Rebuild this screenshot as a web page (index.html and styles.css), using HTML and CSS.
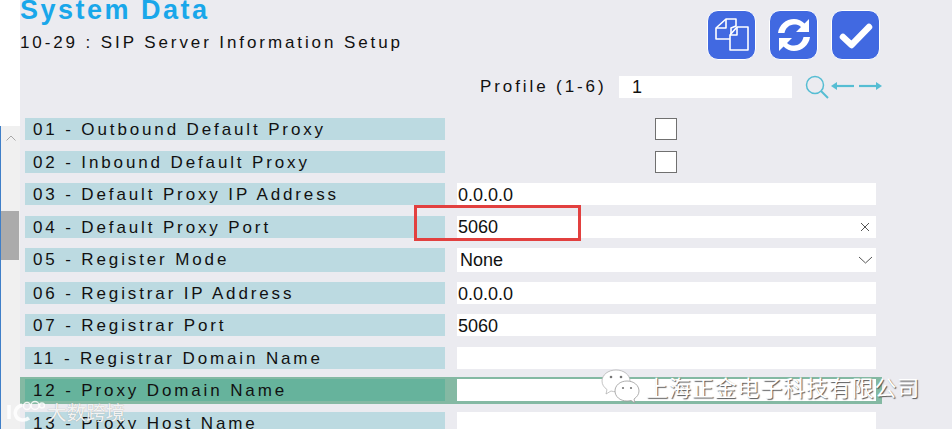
FILE: index.html
```html
<!DOCTYPE html>
<html lang="en">
<head>
<meta charset="utf-8">
<title>System Data</title>
<link rel="stylesheet" href="styles.css">
</head>
<body>
<div class="page">
  <aside class="side">
    <div class="scrollbar">
      <svg class="scroll-up" width="10" height="6" viewBox="0 0 10 6"><path d="M.5 5.5 5 1l4.500 4.500" fill="none" stroke="#a8a8a8"/></svg>
      <div class="thumb"></div>
    </div>
  </aside>
  <main class="main">
    <header class="head">
      <div class="titles">
        <h1 class="title">System Data</h1>
        <p class="subtitle">10-29 : SIP Server Information Setup</p>
      </div>
      <div class="actions">
        <button class="btn" type="button" aria-label="Copy">
          <svg width="34" height="34" viewBox="0 0 34 34" fill="none" stroke="#fff" stroke-width="1.600" stroke-linejoin="round"><path d="M11 1h10v7l-5 2v11H1V10z"/><path d="M11 1v9H1"/><path d="M22 9h11v23H15V17z" fill="#4169e1"/><path d="M22 9v8h-7"/></svg>
        </button>
        <button class="btn" type="button" aria-label="Refresh">
          <svg width="34" height="34" viewBox="0 0 34 34" fill="#fff"><path d="M1 15C2 7 9 1 17 1c4 0 8 2 10.500 4.500L32 1v13H19l5-5C22 7 20 6.500 17 6.500 12.500 6.500 8.500 10 7.500 15z"/><path d="M33 19c-1 8-8 14-16 14-4 0-8-2-10.500-4.500L2 33V20h13l-5 5c2 2 4 2.500 7 2.500 4.500 0 8.500-3.500 9.500-8.500z"/></svg>
        </button>
        <button class="btn" type="button" aria-label="Save">
          <svg width="34" height="34" viewBox="0 0 34 34" fill="none" stroke="#fff" stroke-width="6.500" stroke-linecap="round" stroke-linejoin="round"><path d="M4 19l8.500 8L30 9"/></svg>
        </button>
      </div>
    </header>
    <div class="profile">
      <span class="profile-label">Profile (1-6)</span>
      <span class="profile-value">1</span>
      <svg class="tools" width="78" height="26" viewBox="0 0 78 26" fill="none" stroke="#55bdd3"><circle cx="10" cy="10" r="8.500" stroke-width="1.500"/><path d="M16 16l7 7" stroke-width="2"/><path d="M30 11h19" stroke-width="2.200"/><path d="M26 11l6-4v8z" fill="#55bdd3" stroke="none"/><path d="M54 11h19" stroke-width="2.200"/><path d="M77 11l-6-4v8z" fill="#55bdd3" stroke="none"/></svg>
    </div>
    <div class="rows">
      <div class="row"><div class="label">01 - Outbound Default Proxy</div><div class="value center"><span class="check"></span></div></div>
      <div class="row"><div class="label">02 - Inbound Default Proxy</div><div class="value center"><span class="check"></span></div></div>
      <div class="row"><div class="label">03 - Default Proxy IP Address</div><div class="value field">0.0.0.0</div></div>
      <div class="row"><div class="label">04 - Default Proxy Port</div><div class="value field spread"><span class="port">5060</span><svg width="10" height="10" viewBox="0 0 10 10" fill="none" stroke="#555"><path d="M1 1l8 8M9 1l-8 8"/></svg></div></div>
      <div class="row row-tall"><div class="label">05 - Register Mode</div><div class="value field spread select">None<svg width="15" height="8" viewBox="0 0 15 8" fill="none" stroke="#555"><path d="M1 1l6.500 6L14 1"/></svg></div></div>
      <div class="row"><div class="label">06 - Registrar IP Address</div><div class="value field">0.0.0.0</div></div>
      <div class="row"><div class="label">07 - Registrar Port</div><div class="value field">5060</div></div>
      <div class="row"><div class="label">11 - Registrar Domain Name</div><div class="value field"></div></div>
      <div class="row row-active"><div class="label">12 - Proxy Domain Name</div><div class="value field"></div></div>
      <div class="row"><div class="label">13 - Proxy Host Name</div><div class="value field"></div></div>
    </div>
  </main>
</div>
<div class="redbox"></div>
<div class="mark-left">
  <svg width="38" height="24" viewBox="0 0 38 24" fill="none" stroke="#fff" stroke-opacity=".85"><path d="M2 5v14" stroke-width="3.500"/><path d="M15 5c-6 2-8 7-6 11 2 5 9 5 13 2" stroke-width="3.500"/><circle cx="20" cy="6" r="3.500" stroke-width="1.500"/><circle cx="28" cy="5.500" r="4" stroke-width="1.500"/><circle cx="35" cy="5.500" r="2.500" stroke-width="1.500"/></svg>
  <span class="mark-left-text">大数跨境</span>
</div>
<div class="mark-right">
  <svg width="40" height="34" viewBox="0 0 40 34"><path d="M15 1C7 1 1 6 1 12c0 3.500 2 6.500 5 8.500L5 25l5-3c2 .6 3 .7 5 .7C23 22.700 29 18 29 12S23 1 15 1z" fill="#fff" stroke="#aaa" stroke-width=".7"/><path d="M26 12c-7 0-12 4.500-12 10s5 10 12 10c1.500 0 2.500-.2 4-.6l4 2.600-1-4c3-2 5-4.800 5-8 0-5.500-5-10-12-10z" fill="#fff" stroke="#999" stroke-width=".8"/><circle cx="10" cy="8" r="1.300" fill="#777"/><circle cx="20" cy="8" r="1.300" fill="#777"/><circle cx="22" cy="19" r="1.100" fill="#777"/><circle cx="30" cy="19" r="1.100" fill="#777"/></svg>
  <span class="mark-right-text">上海正金电子科技有限公司</span>
</div>
</body>
</html>
```
FILE: styles.css
```css
* { box-sizing: border-box; }
html, body { margin: 0; height: 429px; overflow: hidden; background: #ebebf0; }
body { font-family: "Liberation Sans", Arial, sans-serif; color: #111; position: relative; }

.page { display: flex; height: 429px; overflow: hidden; }
.side { flex: 0 0 20px; background: #fff; padding-top: 126px; }
.scrollbar { height: 303px; background: #f0f0f0; border-left: 1.500px solid #3f7fc8; display: flex; flex-direction: column; align-items: center; }
.scroll-up { margin-top: 9px; }
.thumb { align-self: stretch; height: 49px; margin-top: 70px; margin-right: 1px; background: #ababab; }

.main { flex: 1; padding-left: 5px; min-width: 0; }
.head { display: flex; justify-content: space-between; height: 76px; margin-left: -5px; padding-right: 72px; }
.title { margin: 0; font-size: 27px; line-height: 20px; height: 20px; font-weight: 700; letter-spacing: 2.500px; color: #19a7ea; }
.subtitle { margin: 13px 0 0; font-size: 17px; line-height: 20px; letter-spacing: 2.900px; white-space: nowrap; }
.actions { display: flex; gap: 13px; padding-top: 10px; }
.btn { width: 49px; height: 50px; padding: 0; background: #4169e1; border: 1px solid #fff; border-radius: 11px; display: flex; align-items: center; justify-content: center; }

.profile { display: flex; align-items: center; height: 22px; margin-left: 455px; }
.profile-label { font-size: 17px; line-height: 24px; letter-spacing: 2.900px; white-space: nowrap; width: 139px; }
.profile-value { width: 173px; height: 22px; background: #fff; padding-left: 13px; font-size: 18px; line-height: 23px; }
.tools { margin-left: 13px; margin-top: 2px; overflow: visible; }

.rows { display: flex; flex-direction: column; gap: 10.500px; margin-top: 20px; width: 851px; }
.row { display: flex; height: 22px; flex: none; }
.row-tall { height: 24px; margin-bottom: -.6px; }
.label { width: 420px; background: #bcdae1; padding-left: 8px; font-size: 17px; line-height: 24px; letter-spacing: 2.870px; white-space: nowrap; overflow: hidden; }
.value { width: 419px; margin-left: 12px; font-size: 18px; line-height: 24px; }
.field { background: #fff; padding-left: 1px; }
.center { display: flex; justify-content: center; margin-left: 11px; }
.check { width: 22px; height: 22px; background: #fff; border: 1px solid #707070; }
.spread { display: flex; justify-content: space-between; align-items: center; padding-right: 6px; }
.port { line-height: 22px; padding-top: 1px; }
.select { padding-left: 3px; padding-right: 3px; }

.row-active { height: 27px; margin: -2px -6px -3px -5px; padding: 2px 6px 3px 5px; background: #84b9a3; }
.row-active .label { background: #66b39c; }

.redbox { position: absolute; left: 414px; top: 205px; width: 167px; height: 36px; border: 3px solid #e2403f; }

.mark-left { position: absolute; left: 7px; top: 400px; display: flex; align-items: center; gap: 2px; }
.mark-left-text { font-family: "Noto Sans CJK SC", sans-serif; font-size: 19.500px; line-height: 24px; color: rgba(255,255,255,.9); text-shadow: 0 0 1px #999; }
.mark-right { position: absolute; left: 601px; top: 369px; display: flex; align-items: center; gap: 5px; }
.mark-right-text { font-family: "Noto Sans CJK SC", sans-serif; font-size: 22px; line-height: 34px; letter-spacing: .85px; color: #fff; text-shadow: 1px 1px 1px #555; white-space: nowrap; }
```
